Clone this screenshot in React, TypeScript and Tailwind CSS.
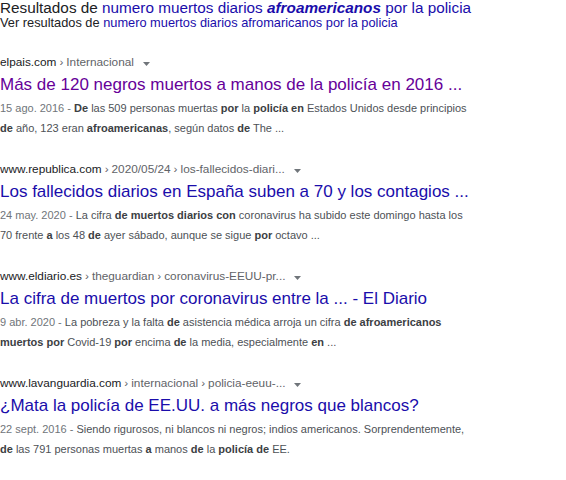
import React from "react";

type Part = { t: string; b?: boolean };

interface Result {
  domain: string;
  crumbs: string[];
  title: string;
  visited?: boolean;
  date: string;
  lines: Part[][];
}

// snippet text is written as "plain **bold** plain"
const parse = (s: string): Part[] =>
  s.split("**").map((t, i) => ({ t, b: i % 2 === 1 })).filter((p) => p.t);

const results: Result[] = [
  {
    domain: "elpais.com",
    crumbs: ["Internacional"],
    title: "Más de 120 negros muertos a manos de la policía en 2016 ...",
    visited: true,
    date: "15 ago. 2016",
    lines: [
      parse("**De** las 509 personas muertas **por** la **policía en** Estados Unidos desde principios"),
      parse("**de** año, 123 eran **afroamericanas**, según datos **de** The ..."),
    ],
  },
  {
    domain: "www.republica.com",
    crumbs: ["2020/05/24", "los-fallecidos-diari..."],
    title: "Los fallecidos diarios en España suben a 70 y los contagios ...",
    date: "24 may. 2020",
    lines: [
      parse("La cifra **de muertos diarios con** coronavirus ha subido este domingo hasta los"),
      parse("70 frente **a** los 48 **de** ayer sábado, aunque se sigue **por** octavo ..."),
    ],
  },
  {
    domain: "www.eldiario.es",
    crumbs: ["theguardian", "coronavirus-EEUU-pr..."],
    title: "La cifra de muertos por coronavirus entre la ... - El Diario",
    date: "9 abr. 2020",
    lines: [
      parse("La pobreza y la falta **de** asistencia médica arroja un cifra **de afroamericanos**"),
      parse("**muertos por** Covid-19 **por** encima **de** la media, especialmente **en** ..."),
    ],
  },
  {
    domain: "www.lavanguardia.com",
    crumbs: ["internacional", "policia-eeuu-..."],
    title: "¿Mata la policía de EE.UU. a más negros que blancos?",
    date: "22 sept. 2016",
    lines: [
      parse("Siendo rigurosos, ni blancos ni negros; indios americanos. Sorprendentemente,"),
      parse("**de** las 791 personas muertas **a** manos **de** la **policía de** EE."),
    ],
  },
];

function Caret() {
  return (
    <svg width="7" height="4" viewBox="0 0 7 4" className="ml-[9px] mt-[1px]">
      <path d="M0 0h7L3.5 4z" fill="#70757a" />
    </svg>
  );
}

function ResultItem({ r }: { r: Result }) {
  return (
    <div className="flex flex-col mb-[22px]">
      <div className="flex items-center h-[20px] text-[11.8px] text-[#5f6368] whitespace-nowrap">
        <span className="text-[#202124]">{r.domain}</span>
        {r.crumbs.map((c) => (
          <span key={c}>
            <span className="mx-[3px]">›</span>
            {c}
          </span>
        ))}
        <Caret />
      </div>
      <div
        className={`h-[24px] leading-[24px] text-[17px] whitespace-nowrap ${
          r.visited ? "text-[#660099]" : "text-[#1a0dab]"
        }`}
      >
        {r.title}
      </div>
      <div className="mt-[1px] text-[11px] leading-[20px] text-[#4d5156]">
        {r.lines.map((line, i) => (
          <div key={i} className="whitespace-nowrap">
            {i === 0 && <span className="text-[#70757a]">{r.date} - </span>}
            {line.map((p, j) =>
              p.b ? (
                <b key={j} className="font-bold text-[#3c4043]">
                  {p.t}
                </b>
              ) : (
                <span key={j}>{p.t}</span>
              )
            )}
          </div>
        ))}
      </div>
    </div>
  );
}

export default function App() {
  return (
    <div className="w-[566px] h-[480px] overflow-hidden bg-white flex flex-col font-['Liberation_Sans',Arial,sans-serif]">
      {/* spelling correction header */}
      <div className="h-[15px] leading-[15px] text-[15.3px] text-[#202124] whitespace-nowrap">
        Resultados de{" "}
        <span className="text-[#1a0dab]">
          numero muertos diarios <b className="italic font-bold">afroamericanos</b> por la policia
        </span>
      </div>
      <div className="h-[15px] leading-[15px] text-[12.8px] text-[#202124] whitespace-nowrap">
        Ver resultados de{" "}
        <span className="text-[#1a0dab]">numero muertos diarios afromaricanos por la policia</span>
      </div>

      <div className="mt-[23px] flex flex-col">
        {results.map((r) => (
          <ResultItem key={r.domain} r={r} />
        ))}
      </div>

      <div className="mt-auto h-[15px] bg-[#f9f9f9]" />
    </div>
  );
}
